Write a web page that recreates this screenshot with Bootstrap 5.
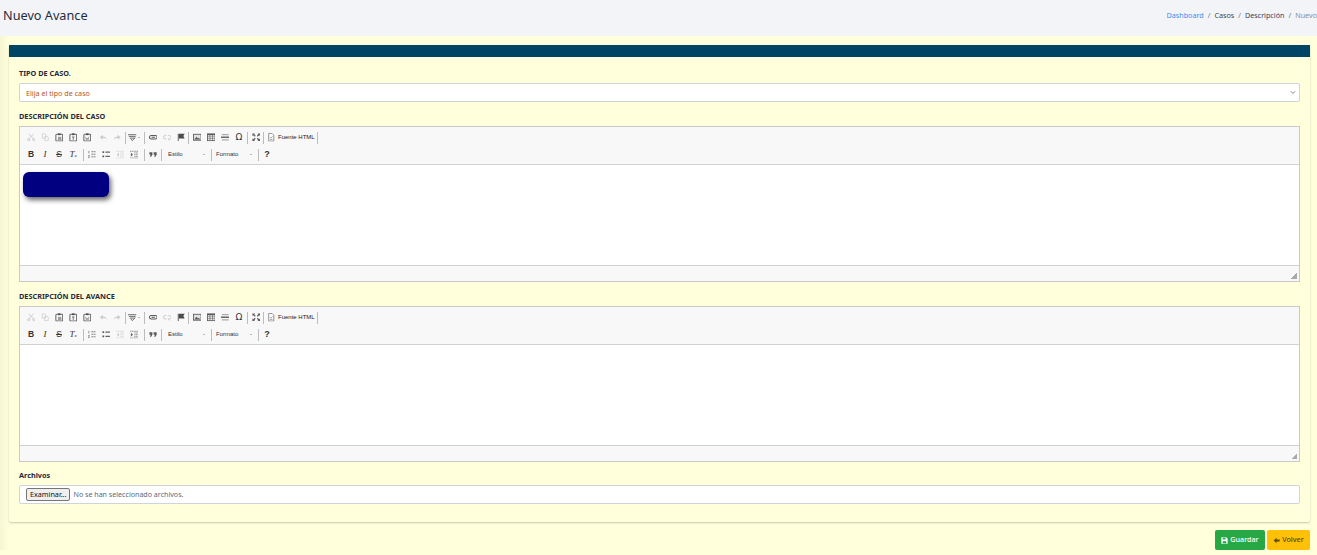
<!DOCTYPE html>
<html lang="es">
<head>
<meta charset="utf-8">
<title>Nuevo Avance</title>
<link href="https://cdn.jsdelivr.net/npm/bootstrap@5.3.0/dist/css/bootstrap.min.css" rel="stylesheet">
<style>
html,body{height:555px;overflow:hidden}
body{background:#ffffdc;font-family:"Noto Sans","Open Sans",sans-serif;font-size:8px;color:#212529}
.page-head{height:36px;background:#f3f4f8;padding:0 0 5px 3px}
.page-head h1{font-size:12.7px;font-weight:400;margin:0;color:#1f2d3d;font-family:"Noto Sans",sans-serif}
.crumbs{font-size:7.2px;margin:0;padding:0;list-style:none;gap:4px;color:#6c757d;white-space:nowrap}
.crumbs a{color:#3b8ff0;text-decoration:none}
.crumbs .c1{color:#444}.crumbs .c2{color:#3a3f5c}.crumbs .c3{color:#8a8f96}
.main-wrap{padding:9px 7px 0 9px;background:linear-gradient(90deg,#f6f6d2,#ffffdc 9px)}
.panel{background:#ffffdc;height:477px;box-shadow:0 1px 2px rgba(0,0,0,.22);border-radius:2px;border:0}
.panel-bar{height:12px;background:#004466}
.panel-body{padding:11px 10px 0 10px}
.lbl{font-size:7.3px;font-weight:700;color:#27293d;line-height:10px;margin:0 0 5px;display:block}
.sel{height:19px;font-size:7.2px;padding:0 6px;color:#b4582a;border:1px solid #ced4da;border-radius:2px;background-size:6px 5px;background-position:right 3px center;min-height:0;line-height:18px;margin-bottom:9px;font-family:inherit}
.editor{border:1px solid #c9c9c9;height:156px;background:#fff;display:flex;flex-direction:column;margin-bottom:9px}
.editor-last{margin-bottom:8px}
.ed-tools{height:38px;background:#f8f8f8;border-bottom:1px solid #d1d1d1;padding:2px 0 0 4px}
.tb-row{height:17px;display:flex;align-items:center;color:#474747}
.bt{width:14px;height:14px;display:flex;align-items:center;justify-content:center;flex:none;font-family:"Liberation Serif",serif;font-size:9px;color:#333}
.bt svg{width:8.5px;height:8.5px;display:block;opacity:.8}
.b-sans{font-family:"Liberation Sans",sans-serif;font-size:8.500px}
.off{opacity:.3}
.sp{width:1px;height:12px;background:#bcbcbc;flex:none;margin:0 1px}
.src{font-family:"Liberation Sans",sans-serif;font-size:6px;white-space:nowrap;color:#222}
.combo{font-family:"Liberation Sans",sans-serif;font-size:6px;color:#333;display:flex;justify-content:space-between;align-items:center;flex:none;padding:0 5px}
.ed-body{height:100px;background:#fff;padding:7px 3px;flex:none}
.blot{width:86px;height:25px;background:navy;border-radius:6px;box-shadow:2px 3px 5px rgba(0,0,0,.6)}
.ed-foot{flex:1;background:#f8f8f8;border-top:1px solid #d1d1d1;position:relative}
.grip{position:absolute;right:2px;bottom:2px;width:6px;height:6px;background:linear-gradient(135deg,transparent 50%,#aaa 50%)}
.file-box{height:19px;border:1px solid #ced4da;border-radius:2px;background:#fff;padding:0 6px;font-size:7.1px;color:#5b6a7a;gap:3px}
.file-btn{height:13px;padding:0 3px;font-size:7.2px;line-height:11px;border:1px solid #767676;border-radius:2px;background:#efefef;color:#111;font-family:inherit}
.foot-btns{padding:8px 0 0 0;gap:2px}
.act{height:20px;font-size:7.2px;font-weight:500;border-radius:2px;display:flex;align-items:center;justify-content:center;gap:2px;border:0;padding:0;line-height:1}
.act svg{width:7px;height:7px}
.act-save{background:#28a745;color:#fff;width:50px}
.act-back{background:#ffc107;color:#5a4500;width:43px}
.spell{margin-left:-1px;justify-content:flex-start;padding-left:2px;gap:1.500px;font-family:"Liberation Sans",sans-serif;font-size:6px}
.ms-tb{margin-left:2px}
.ms-c{margin-left:4px}
.s0{margin-left:0}
.s3{margin-left:3px}
.srcb{margin-left:-1px}
.sl{margin-left:2px}
.c-a{width:47px}
.c-b{width:44px;padding-left:3px}
.omega{font-family:"DejaVu Sans",sans-serif;font-size:9px}
.help{font-family:"Liberation Sans",sans-serif;font-size:9px}
.tx{font-size:5px;bottom:-.2em}
</style>
</head>
<body>
<svg width="0" height="0" class="d-none">
<defs>
<symbol id="i-cut" viewBox="0 0 10 10"><path d="M2 1l6 6M8 1L2 7" stroke="#333" fill="none"/><circle cx="2" cy="8" r="1.300" fill="none" stroke="#333"/><circle cx="8" cy="8" r="1.300" fill="none" stroke="#333"/></symbol>
<symbol id="i-copy" viewBox="0 0 10 10"><path d="M1.500 1h3l1 1v4h-4zM4.500 4h3l1 1v4h-4z" fill="#fff" stroke="#333" stroke-width=".8"/></symbol>
<symbol id="i-paste" viewBox="0 0 10 10"><rect x="1" y="1.500" width="8" height="8" rx="1" fill="none" stroke="#444" stroke-width="1.200"/><rect x="3.500" y=".5" width="3" height="2" fill="#222"/><rect x="3.500" y="4.500" width="4" height="4" fill="#888"/></symbol>
<symbol id="i-pastet" viewBox="0 0 10 10"><rect x="1" y="1.500" width="8" height="8" rx="1" fill="none" stroke="#444" stroke-width="1.200"/><rect x="3.500" y=".5" width="3" height="2" fill="#222"/><path d="M3.500 4.700h3M5 4.700v3.500" stroke="#444"/></symbol>
<symbol id="i-pastew" viewBox="0 0 10 10"><rect x="1" y="1.500" width="8" height="8" rx="1" fill="none" stroke="#444" stroke-width="1.200"/><rect x="3.500" y=".5" width="3" height="2" fill="#222"/><path d="M3 4.500l1 3.500 1-2 1 2 1-3.500" stroke="#444" stroke-width=".7" fill="none"/></symbol>
<symbol id="i-undo" viewBox="0 0 10 10"><path d="M4.500 2L1 5l3.500 3V6h2.500l2 1.500C8.500 5 7 4 4.500 4z" fill="#444"/></symbol>
<symbol id="i-redo" viewBox="0 0 10 10"><path d="M5.500 2L9 5 5.500 8V6H3L1 7.500C1.500 5 3 4 5.500 4z" fill="#444"/></symbol>
<symbol id="i-spell" viewBox="0 0 10 10"><path d="M0 2h10M1 4h8M2 6h6" stroke="#333" stroke-width="1"/><path d="M3.500 7l1.500 2 3.500-3.500" stroke="#333" fill="none"/></symbol>
<symbol id="i-link" viewBox="0 0 10 10"><rect x=".5" y="3" width="9" height="4" rx="2" fill="none" stroke="#333" stroke-width="1.200"/><path d="M3 5h4" stroke="#333" stroke-width="1.200"/></symbol>
<symbol id="i-unlink" viewBox="0 0 10 10"><path d="M4 3H2.500a2 2 0 000 4H4M6 3h1.500a2 2 0 010 4H6" fill="none" stroke="#333" stroke-width="1.100"/><path d="M6 7l2 2" stroke="#333"/></symbol>
<symbol id="i-flag" viewBox="0 0 10 10"><path d="M1.500 1v8.500" stroke="#222"/><path d="M2 1h7L7.500 3.500 9 6.500H2z" fill="#222"/></symbol>
<symbol id="i-image" viewBox="0 0 10 10"><rect x=".5" y="1.500" width="9" height="7" fill="#ddd" stroke="#333"/><path d="M1.500 7.500l2.500-3 1.800 2 1-1 1.700 2z" fill="#333"/></symbol>
<symbol id="i-table" viewBox="0 0 10 10"><rect x=".5" y="1" width="9" height="8" fill="#fff" stroke="#333"/><path d="M.5 2h9" stroke="#333" stroke-width="1.500"/><path d="M.5 4.500h9M.5 6.700h9M3.500 2v7M6.500 2v7" stroke="#333" stroke-width=".7"/></symbol>
<symbol id="i-hr" viewBox="0 0 10 10"><path d="M1 2h8M1 8h8" stroke="#999" stroke-width="1.400"/><path d="M0 5h10" stroke="#444" stroke-width="1.600"/></symbol>
<symbol id="i-max" viewBox="0 0 10 10"><path d="M.5.500h3L2.600 1.500 4.300 3.300 3.300 4.300 1.500 2.600.5 3.500zM9.500.500h-3l.9 1-1.700 1.800 1 1 1.800-1.700 1 .9zM.5 9.500h3l-.9-1 1.700-1.800-1-1-1.800 1.700-1-.9zM9.500 9.500h-3l.9-1-1.700-1.800 1-1 1.800 1.700 1-.9z" fill="#333"/></symbol>
<symbol id="i-src" viewBox="0 0 10 10"><path d="M2 .5h4l2 2v7H2z" fill="#fff" stroke="#444" stroke-width=".8"/><path d="M3.500 5l1 1 2-2M3.500 7.500h3" stroke="#444" stroke-width=".7" fill="none"/></symbol>
<symbol id="i-ol" viewBox="0 0 10 10"><path d="M4 2h6M4 5h6M4 8h6" stroke="#444" stroke-dasharray="2 .6"/><path d="M1 1v3M.3 6.500h1.500L.3 9h1.700" stroke="#444" stroke-width=".8" fill="none"/></symbol>
<symbol id="i-ul" viewBox="0 0 10 10"><path d="M4 2.500h6M4 7.500h6" stroke="#444" stroke-width="1.200"/><rect x=".5" y="1.500" width="2" height="2" fill="#333"/><rect x=".5" y="6.500" width="2" height="2" fill="#333"/></symbol>
<symbol id="i-out" viewBox="0 0 10 10"><path d="M0 1.500h10M5 3.500h5M5 5.500h5M5 7.500h5M0 9.500h10" stroke="#444" stroke-width=".8" stroke-dasharray="1.500 .5"/><path d="M3.500 3L1 5.500 3.500 8z" fill="#444"/></symbol>
<symbol id="i-ind" viewBox="0 0 10 10"><path d="M0 1.500h10M5 3.500h5M5 5.500h5M5 7.500h5M0 9.500h10" stroke="#444" stroke-width=".8" stroke-dasharray="1.500 .5"/><path d="M1 3l2.500 2.500L1 8z" fill="#444"/></symbol>
<symbol id="i-quote" viewBox="0 0 10 10"><path d="M.5 2.500h3.500v3L2.500 8H1l1-2.500H.5zM5.500 2.500H9v3L7.500 8H6l1-2.500H5.500z" fill="#333"/></symbol>
</defs>
</svg>

<header class="page-head d-flex align-items-center justify-content-between">
  <h1>Nuevo Avance</h1>
  <ol class="crumbs d-flex">
    <li><a href="#">Dashboard</a></li><li>/</li><li class="c1">Casos</li><li>/</li><li class="c2">Descripción</li><li>/</li><li class="c3">Nuevo</li>
  </ol>
</header>

<main class="main-wrap">
  <section class="card panel">
    <div class="panel-bar"></div>
    <div class="panel-body">
      <label class="lbl">TIPO DE CASO.</label>
      <select class="form-select sel"><option>Elija el tipo de caso</option></select>

      <label class="lbl">DESCRIPCIÓN DEL CASO</label>
      <div class="editor">
        <div class="ed-tools">
          <div class="tb-row">
            <span class="bt off"><svg><use href="#i-cut"/></svg></span><span class="bt off"><svg><use href="#i-copy"/></svg></span><span class="bt"><svg><use href="#i-paste"/></svg></span><span class="bt"><svg><use href="#i-pastet"/></svg></span><span class="bt"><svg><use href="#i-pastew"/></svg></span>
            <span class="bt off ms-tb"><svg><use href="#i-undo"/></svg></span><span class="bt off"><svg><use href="#i-redo"/></svg></span><span class="sp"></span>
            <span class="bt spell"><svg><use href="#i-spell"/></svg>-</span><span class="sp ms-c"></span>
            <span class="bt"><svg><use href="#i-link"/></svg></span><span class="bt off"><svg><use href="#i-unlink"/></svg></span><span class="bt"><svg><use href="#i-flag"/></svg></span><span class="sp s0"></span>
            <span class="bt"><svg><use href="#i-image"/></svg></span><span class="bt"><svg><use href="#i-table"/></svg></span><span class="bt"><svg><use href="#i-hr"/></svg></span><span class="bt omega">Ω</span><span class="sp"></span>
            <span class="bt"><svg><use href="#i-max"/></svg></span><span class="sp s0"></span>
            <span class="bt srcb"><svg><use href="#i-src"/></svg></span><span class="src">Fuente HTML</span><span class="sp sl"></span>
          </div>
          <div class="tb-row">
            <span class="bt b-sans fw-bold">B</span><span class="bt fst-italic">I</span><span class="bt b-sans text-decoration-line-through">S</span><span class="bt fst-italic">T<sub class="tx">x</sub></span><span class="sp s3"></span>
            <span class="bt"><svg><use href="#i-ol"/></svg></span><span class="bt"><svg><use href="#i-ul"/></svg></span><span class="bt off"><svg><use href="#i-out"/></svg></span><span class="bt"><svg><use href="#i-ind"/></svg></span><span class="sp s3"></span>
            <span class="bt"><svg><use href="#i-quote"/></svg></span><span class="sp"></span>
            <span class="combo c-a">Estilo<span>-</span></span><span class="sp"></span>
            <span class="combo c-b">Formato<span>-</span></span><span class="sp"></span>
            <span class="bt fw-bold help">?</span>
          </div>
        </div>
        <div class="ed-body"><div class="blot"></div></div>
        <div class="ed-foot"><span class="grip"></span></div>
      </div>

      <label class="lbl">DESCRIPCIÓN DEL AVANCE</label>
      <div class="editor editor-last">
        <div class="ed-tools">
          <div class="tb-row">
            <span class="bt off"><svg><use href="#i-cut"/></svg></span><span class="bt off"><svg><use href="#i-copy"/></svg></span><span class="bt"><svg><use href="#i-paste"/></svg></span><span class="bt"><svg><use href="#i-pastet"/></svg></span><span class="bt"><svg><use href="#i-pastew"/></svg></span>
            <span class="bt off ms-tb"><svg><use href="#i-undo"/></svg></span><span class="bt off"><svg><use href="#i-redo"/></svg></span><span class="sp"></span>
            <span class="bt spell"><svg><use href="#i-spell"/></svg>-</span><span class="sp ms-c"></span>
            <span class="bt"><svg><use href="#i-link"/></svg></span><span class="bt off"><svg><use href="#i-unlink"/></svg></span><span class="bt"><svg><use href="#i-flag"/></svg></span><span class="sp s0"></span>
            <span class="bt"><svg><use href="#i-image"/></svg></span><span class="bt"><svg><use href="#i-table"/></svg></span><span class="bt"><svg><use href="#i-hr"/></svg></span><span class="bt omega">Ω</span><span class="sp"></span>
            <span class="bt"><svg><use href="#i-max"/></svg></span><span class="sp s0"></span>
            <span class="bt srcb"><svg><use href="#i-src"/></svg></span><span class="src">Fuente HTML</span><span class="sp sl"></span>
          </div>
          <div class="tb-row">
            <span class="bt b-sans fw-bold">B</span><span class="bt fst-italic">I</span><span class="bt b-sans text-decoration-line-through">S</span><span class="bt fst-italic">T<sub class="tx">x</sub></span><span class="sp s3"></span>
            <span class="bt"><svg><use href="#i-ol"/></svg></span><span class="bt"><svg><use href="#i-ul"/></svg></span><span class="bt off"><svg><use href="#i-out"/></svg></span><span class="bt"><svg><use href="#i-ind"/></svg></span><span class="sp s3"></span>
            <span class="bt"><svg><use href="#i-quote"/></svg></span><span class="sp"></span>
            <span class="combo c-a">Estilo<span>-</span></span><span class="sp"></span>
            <span class="combo c-b">Formato<span>-</span></span><span class="sp"></span>
            <span class="bt fw-bold help">?</span>
          </div>
        </div>
        <div class="ed-body"></div>
        <div class="ed-foot"><span class="grip"></span></div>
      </div>

      <label class="lbl">Archivos</label>
      <div class="file-box d-flex align-items-center"><button type="button" class="file-btn">Examinar...</button><span>No se han seleccionado archivos.</span></div>
    </div>
  </section>
  <div class="foot-btns d-flex justify-content-end">
    <button type="button" class="act act-save"><svg viewBox="0 0 10 10"><path d="M.5.500h7l2 2v7h-9z" fill="#fff"/><rect x="2.500" y="1" width="4" height="2.500" fill="#28a745"/><rect x="2.500" y="6" width="5" height="3" fill="#28a745"/></svg>Guardar</button>
    <button type="button" class="act act-back"><svg viewBox="0 0 10 10"><path d="M5 1L1 5l4 4V6.500h4.500v-3H5z" fill="#5a4500"/></svg>Volver</button>
  </div>
</main>
</body>
</html>
